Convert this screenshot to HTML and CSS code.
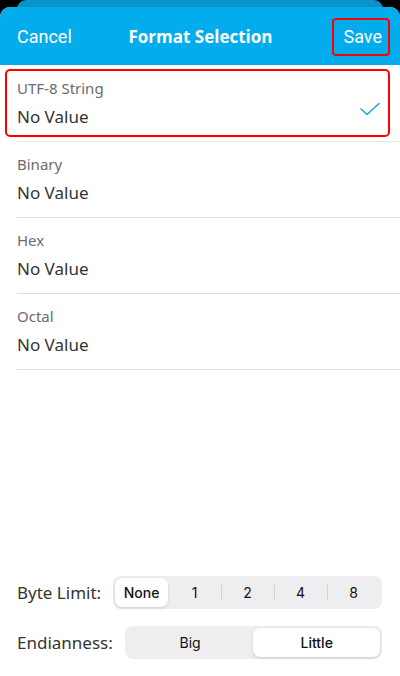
FILE: index.html
```html
<!DOCTYPE html>
<html>
<head>
<meta charset="UTF-8">
<title>Format Selection</title>
<link rel="stylesheet" href="styles.css">
</head>
<body>
<div class="back-sheet"></div>
<div class="sheet">
	<div class="navbar">
		<span class="nav-btn">Cancel</span>
		<span class="nav-title">Format Selection</span>
		<span class="nav-btn save">Save</span>
	</div>

	<div class="list">
		<div class="row selected">
			<div class="highlight">
				<div class="cell">
					<div class="label">UTF-8 String</div>
					<div class="value">No Value</div>
				</div>
				<svg class="check" width="20" height="14" viewBox="0 0 20 14">
					<polyline points="1,7 7,12.5 19,1.5" fill="none" stroke="#1ea6e2" stroke-width="1.6" stroke-linecap="round" stroke-linejoin="round"/>
				</svg>
			</div>
		</div>
		<div class="row">
			<div class="label">Binary</div>
			<div class="value">No Value</div>
		</div>
		<div class="row">
			<div class="label">Hex</div>
			<div class="value">No Value</div>
		</div>
		<div class="row">
			<div class="label">Octal</div>
			<div class="value">No Value</div>
		</div>
	</div>

	<div class="controls">
		<div class="control">
			<span class="control-label">Byte Limit:</span>
			<div class="segmented">
				<span class="seg active">None</span>
				<span class="seg">1</span>
				<span class="seg divided">2</span>
				<span class="seg divided">4</span>
				<span class="seg divided">8</span>
			</div>
		</div>
		<div class="control">
			<span class="control-label">Endianness:</span>
			<div class="segmented">
				<span class="seg">Big</span>
				<span class="seg active">Little</span>
			</div>
		</div>
	</div>
</div>
</body>
</html>
```

FILE: styles.css
```css
html, body {
	margin: 0;
	height: 100%;
}

body {
	background-color: #000;
	font-family: "Noto Sans", Roboto, Arial, sans-serif;
	display: flex;
	flex-direction: column;
}

.back-sheet {
	height: 10px;
	margin: 0 17px -3px 17px;
	background-color: #0b93c8;
	border-radius: 9px 9px 0 0;
}

.sheet {
	flex: 1;
	position: relative;
	background-color: #fff;
	border-radius: 10px 10px 0 0;
	overflow: hidden;
	display: flex;
	flex-direction: column;
}

/* header */

.navbar {
	height: 58px;
	background-color: #03acec;
	display: grid;
	grid-template-columns: 1fr auto 1fr;
	align-items: center;
	padding: 0 10px 0 17px;
	color: #fff;
	font-family: Roboto, "Noto Sans", Arial, sans-serif;
	font-size: 18px;
}

.nav-title {
	font-weight: bold;
	font-family: "Open Sans", Roboto, Arial, sans-serif;
	font-size: 17px;
	padding-right: 6px;
}

.save {
	justify-self: end;
	border: 2px solid #ff0000;
	border-radius: 4px;
	padding: 7px 6px 7px 10px;
	line-height: 20px;
	margin-top: 2px;
}

/* list */

.row {
	margin-left: 17px;
	height: 76px;
	box-sizing: border-box;
	padding-top: 12px;
	border-bottom: 1px solid #dedede;
}

.row.selected {
	margin-left: 0;
	padding: 4px 10px 5px 5px;
	border-bottom: none;
	position: relative;
	height: 77px;
}

.row.selected::after {
	content: "";
	position: absolute;
	left: 17px;
	right: 0;
	bottom: 0;
	border-bottom: 1px solid #e6e6e6;
}

.highlight {
	border: 2px solid #ff0000;
	border-radius: 5px;
	height: 100%;
	box-sizing: border-box;
	padding: 7px 8px 0 10px;
	display: flex;
	align-items: center;
	justify-content: space-between;
}

.cell {
	align-self: flex-start;
}

.check {
	margin-top: 4px;
}

.label {
	font-size: 15px;
	line-height: 20px;
	color: #6c6c6c;
}

.value {
	font-size: 17px;
	line-height: 22px;
	margin-top: 8px;
	color: #333;
}

/* bottom controls */

.controls {
	margin-top: auto;
	padding: 0 18px 17px 17px;
	display: flex;
	flex-direction: column;
	gap: 17px;
}

.control {
	display: flex;
	align-items: center;
	gap: 12px;
}

.control-label {
	font-size: 17px;
	color: #333;
	white-space: nowrap;
}

.segmented {
	flex: 1;
	display: flex;
	height: 33px;
	box-sizing: border-box;
	padding: 2px;
	background-color: #eeeef0;
	border-radius: 8px;
	font-family: Inter, Roboto, Arial, sans-serif;
	font-size: 14px;
	color: #111;
}

.seg {
	flex: 1;
	display: flex;
	align-items: center;
	justify-content: center;
	position: relative;
}

.seg.divided::before {
	content: "";
	position: absolute;
	left: 0;
	top: 7px;
	bottom: 7px;
	border-left: 1px solid #d2d2d6;
}

.seg.active {
	background-color: #fff;
	border-radius: 7px;
	box-shadow: 0 1px 3px rgba(0, 0, 0, 0.15);
	font-weight: 500;
}
```
